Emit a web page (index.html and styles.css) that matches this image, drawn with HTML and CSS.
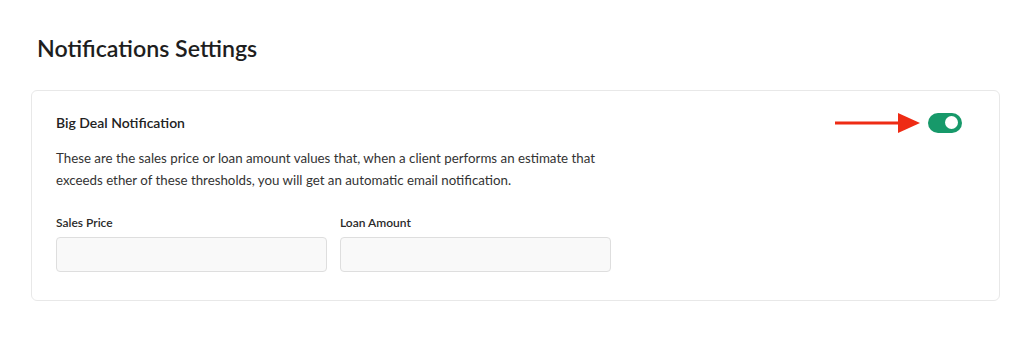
FILE: index.html
```html
<!DOCTYPE html>
<html lang="en">
<head>
    <meta charset="UTF-8">
    <title>Notifications Settings</title>
    <link rel="stylesheet" href="styles.css">
</head>
<body>
    <main class="page">
        <h1 class="page-title">Notifications Settings</h1>
        <section class="card">
            <div class="card-head">
                <h2 class="card-title">Big Deal Notification</h2>
                <div class="toggle-wrap">
                    <svg class="arrow" width="86" height="22" viewBox="0 0 86 22">
                        <line x1="0" y1="11" x2="66" y2="11" stroke="#ee2b14" stroke-width="3"/>
                        <polygon points="63,1 85,11 63,21" fill="#ee2b14"/>
                    </svg>
                    <span class="toggle on"><span class="knob"></span></span>
                </div>
            </div>
            <p class="card-desc">These are the sales price or loan amount values that, when a client performs an estimate that exceeds ether of these thresholds, you will get an automatic email notification.</p>
            <div class="fields">
                <label class="field">
                    <span class="field-label">Sales Price</span>
                    <input class="field-input" type="text">
                </label>
                <label class="field">
                    <span class="field-label">Loan Amount</span>
                    <input class="field-input" type="text">
                </label>
            </div>
        </section>
    </main>
</body>
</html>
```

FILE: styles.css
```css
body {
    margin: 0;
    font-family: "Lato", "Liberation Sans", sans-serif;
    color: #222;
    background-color: #ffffff;
}

.page {
    padding: 33px 32px 0 31px;
}

.page-title {
    margin: 0 0 27px 6px;
    font-size: 23.2px;
    font-weight: 600;
    color: #1e1e1e;
    line-height: 30px;
}

.card {
    border: 1px solid #e8e8e8;
    border-radius: 6px;
    padding: 20px 24px 28px 24px;
}

.card-head {
    display: flex;
    justify-content: space-between;
    align-items: center;
    height: 23px;
}

.card-title {
    margin: 0;
    font-size: 14px;
    font-weight: 600;
    color: #222;
}

.toggle-wrap {
    display: flex;
    align-items: center;
    gap: 7px;
    margin-right: 13px;
}

.toggle {
    position: relative;
    display: inline-block;
    width: 34px;
    height: 20px;
    border-radius: 10px;
    background-color: #d5d5d5;
}

.toggle.on {
    background-color: #17996a;
}

.knob {
    position: absolute;
    top: 3.5px;
    left: 3px;
    width: 13px;
    height: 13px;
    border-radius: 50%;
    background-color: #ffffff;
}

.toggle.on .knob {
    left: auto;
    right: 4px;
}

.card-desc {
    width: 580px;
    margin: 13px 0 24px;
    font-size: 13.3px;
    line-height: 22px;
    color: #333;
}

.fields {
    display: flex;
    gap: 13px;
}

.field {
    display: flex;
    flex-direction: column;
    gap: 6px;
}

.field-label {
    font-size: 12px;
    font-weight: 600;
    color: #2a2a2a;
    line-height: 16px;
}

.field-input {
    box-sizing: border-box;
    width: 271px;
    height: 35px;
    border: 1px solid #dedede;
    border-radius: 4px;
    background-color: #f9f9f9;
    font-family: inherit;
}
```
